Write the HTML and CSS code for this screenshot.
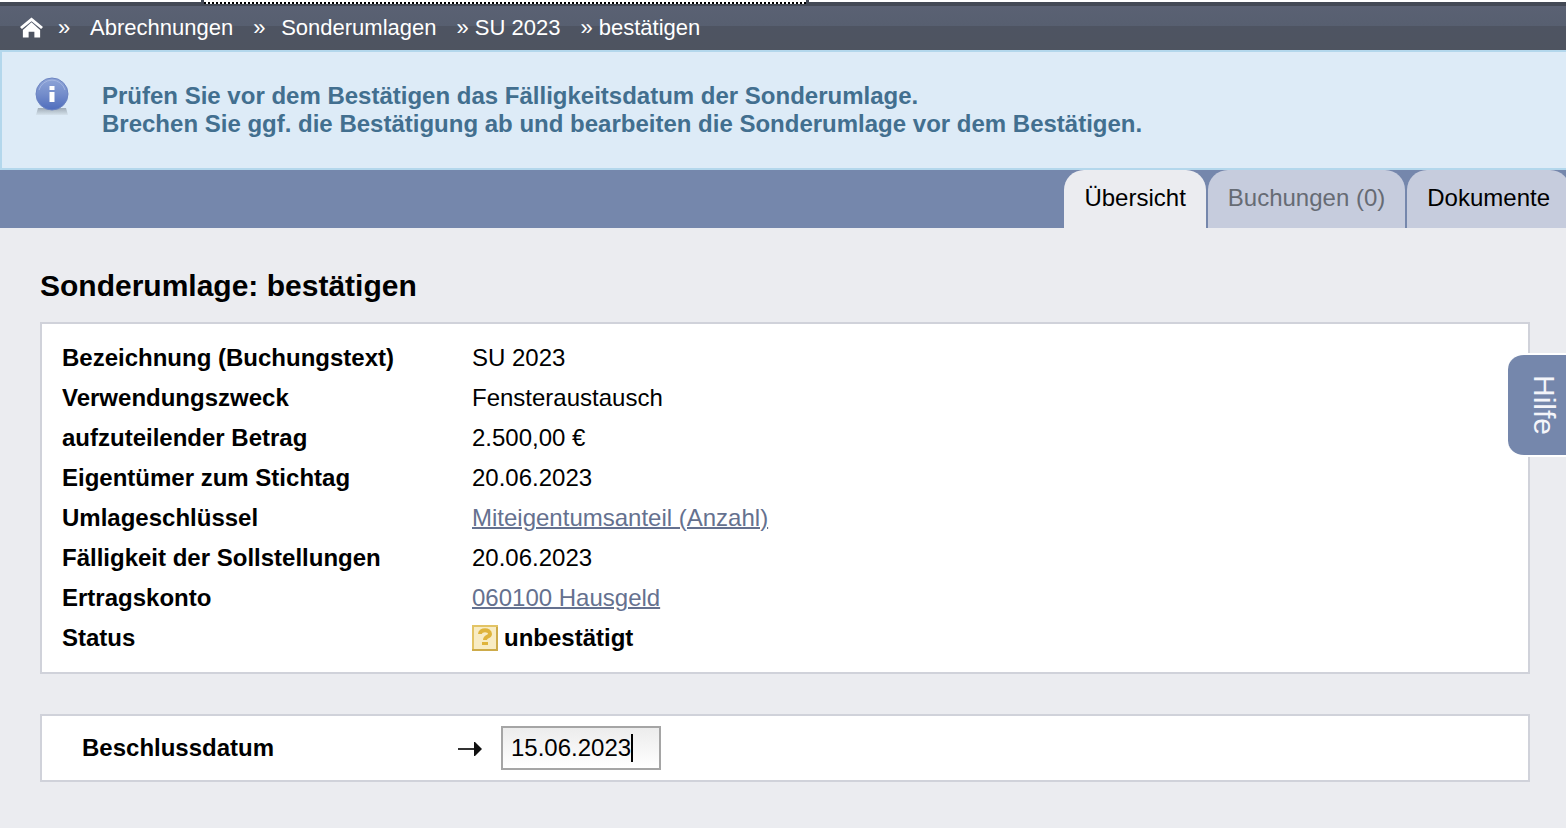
FILE: index.html
```html
<!DOCTYPE html>
<html lang="de">
<head>
  <meta charset="utf-8">
  <title>Sonderumlage: bestätigen</title>
  <link rel="stylesheet" href="styles.css">
</head>
<body>

  <header class="topbar">
    <span class="focus-line"></span>
    <nav class="breadcrumb">
      <a href="#" class="home" aria-label="Startseite">
        <svg width="23" height="22" viewBox="0 0 24 22">
          <path d="M12 0 L24 10 L22 12 L12 4 L2 12 L0 10 Z" fill="#fff"/>
          <path d="M3 13 L12 5 L21 13 V21 H15 V15 H9 V21 H3 Z" fill="#fff"/>
        </svg>
      </a>
      <span class="sep">»</span>
      <a href="#">Abrechnungen</a>
      <span class="sep">»</span>
      <a href="#">Sonderumlagen</a>
      <span class="crumb">» SU 2023</span>
      <span class="crumb">» bestätigen</span>
    </nav>
  </header>

  <div class="info">
    <svg class="info-icon" width="36" height="40" viewBox="0 0 36 40">
      <defs>
        <linearGradient id="ball" x1="0" y1="0" x2="0" y2="1">
          <stop offset="0" stop-color="#8fa5d8"/>
          <stop offset="0.5" stop-color="#748dcb"/>
          <stop offset="1" stop-color="#4f6dbd"/>
        </linearGradient>
        <linearGradient id="shade" x1="0" y1="0" x2="0" y2="1">
          <stop offset="0" stop-color="#9fabb6"/>
          <stop offset="1" stop-color="#d5e2ec"/>
        </linearGradient>
      </defs>
      <path d="M4 32 H32 L34 39 H2 Z" fill="url(#shade)"/>
      <circle cx="18" cy="18" r="16" fill="url(#ball)" stroke="#6c84c2"/>
      <path d="M5 14 A13.5 13.5 0 0 1 31 14" fill="none" stroke="#a3b5e0" stroke-width="1"/>
      <rect x="15.5" y="10" width="5" height="4" fill="#fff"/>
      <path d="M15.500 16 H20.5 V26 H15.5 Z" fill="#fff"/>
    </svg>
    <p>Prüfen Sie vor dem Bestätigen das Fälligkeitsdatum der Sonderumlage.<br>
      Brechen Sie ggf. die Bestätigung ab und bearbeiten die Sonderumlage vor dem Bestätigen.</p>
  </div>

  <nav class="tabs">
    <a href="#" class="tab active">Übersicht</a>
    <a href="#" class="tab disabled">Buchungen (0)</a>
    <a href="#" class="tab">Dokumente</a>
  </nav>

  <main>
    <h1>Sonderumlage: bestätigen</h1>

    <div class="box">
      <table class="details">
        <tr><th>Bezeichnung (Buchungstext)</th><td>SU 2023</td></tr>
        <tr><th>Verwendungszweck</th><td>Fensteraustausch</td></tr>
        <tr><th>aufzuteilender Betrag</th><td>2.500,00 €</td></tr>
        <tr><th>Eigentümer zum Stichtag</th><td>20.06.2023</td></tr>
        <tr><th>Umlageschlüssel</th><td><a href="#">Miteigentumsanteil (Anzahl)</a></td></tr>
        <tr><th>Fälligkeit der Sollstellungen</th><td>20.06.2023</td></tr>
        <tr><th>Ertragskonto</th><td><a href="#">060100 Hausgeld</a></td></tr>
        <tr>
          <th>Status</th>
          <td>
            <div class="status">
              <svg width="26" height="26" viewBox="0 0 26 26">
                <rect x="1" y="1" width="24" height="24" fill="#f8ecc4" stroke="#e3c465" stroke-width="2"/>
                <path d="M0 25 H25 V2" fill="none" stroke="#cdab4a" stroke-width="2"/>
                <path d="M8 9 C8 4 18 4 18 9 C18 12 13 11 13 15" fill="none" stroke="#dfb43c" stroke-width="4"/>
                <rect x="10" y="17" width="6" height="3" fill="#dfb43c"/>
              </svg>
              unbestätigt
            </div>
          </td>
        </tr>
      </table>
    </div>

    <form class="box date-form">
      <label for="date">Beschlussdatum</label>
      <svg class="arrow" width="26" height="16" viewBox="0 0 26 16">
        <path d="M1 9 H18" stroke="#333" stroke-width="2"/>
        <path d="M17 2 L18 2 L25 9 L18 16 L17 16 Z" fill="#111"/>
      </svg>
      <div class="field">
        <input type="text" id="date" value="15.06.2023">
        <span class="caret"></span>
      </div>
    </form>
  </main>

  <button type="button" class="help">Hilfe</button>

</body>
</html>
```
FILE: styles.css
```css
* {
  box-sizing: border-box;
}
body {
  margin: 0;
  background-color: #ebecf0;
  font-family: "Liberation Sans", Arial, sans-serif;
  font-size: 24px;
  line-height: 28px;
  color: #000;
  overflow-x: hidden;
}
.topbar {
  position: relative;
  height: 50px;
  border-top: 2px solid #fff;
  background: linear-gradient(#434955 4px, #5a6173 4px, #575f70 24px, #4e5462 24px, #4e5460);
}
.focus-line {
  position: absolute;
  top: 0;
  left: 202px;
  width: 606px;
  height: 2px;
  background: repeating-linear-gradient(90deg, #fff 0 2px, #000 2px 4px);
}
/* ends of the focus line */
.focus-line::before,
.focus-line::after {
  content: "";
  position: absolute;
  top: -2px;
  left: -1px;
  width: 3px;
  height: 4px;
  background-color: #434955;
}
.focus-line::after {
  left: 604px;
}
.breadcrumb {
  display: flex;
  align-items: center;
  padding: 12px 20px 0;
  font-size: 22px;
  color: #fff;
}
.breadcrumb a {
  color: #fff;
  text-decoration: none;
}
.home {
  display: flex;
  width: 38px;
}
.sep {
  width: 28px;
}
.home + .sep {
  margin-right: 4px;
}
.sep + a {
  margin-right: 20px;
}
.crumb {
  margin-right: 20px;
}
.info {
  display: flex;
  height: 120px;
  padding: 24px 32px;
  border: 2px solid #b3d7ec;
  border-right: 0;
  background-color: #ddebf7;
}
.info-icon {
  flex: none;
  margin-right: 32px;
}
.info p {
  margin: 6px 0 0;
  font-weight: bold;
  color: #426f8f;
}
.tabs {
  display: flex;
  justify-content: flex-end;
  gap: 2px;
  margin-right: -4px;
  background-color: #7587ac;
}
.tab {
  height: 58px;
  padding: 14px 20px;
  border-radius: 20px 20px 0 0;
  background-color: #c6ccdd;
  color: #000;
  text-decoration: none;
}
.tab.active {
  background-color: #ebecf0;
}
.tab.disabled {
  color: #666b74;
}
main {
  padding: 40px 36px 40px 40px;
}
h1 {
  margin: 0 0 18px;
  font-size: 30px;
  line-height: 36px;
}
.box {
  margin-bottom: 40px;
  border: 2px solid #d0d2da;
  background-color: #fff;
}
.details {
  width: 100%;
  margin: 14px 0;
  border-collapse: collapse;
}
.details th,
.details td {
  height: 40px;
  padding: 0 20px;
  text-align: left;
}
.details th {
  width: 410px;
}
.details a {
  color: #65718f;
  text-decoration-thickness: 2px;
}
.status {
  display: flex;
  align-items: center;
  gap: 6px;
  font-weight: bold;
}
.date-form {
  display: flex;
  align-items: center;
  padding: 10px 40px;
}
.date-form label {
  width: 375px;
  font-weight: bold;
}
.arrow {
  margin-right: 18px;
}
.field {
  position: relative;
}
.field input {
  display: block;
  width: 160px;
  height: 44px;
  padding: 0 8px;
  border: 2px solid #a5a5a5;
  outline: none;
  background: linear-gradient(#ececec, #fff);
  font: inherit;
}
.caret {
  position: absolute;
  top: 8px;
  left: 130px;
  width: 2px;
  height: 28px;
  background-color: #000;
}
.help {
  position: fixed;
  top: 353px;
  right: 0;
  width: 58px;
  height: 104px;
  padding: 0 0 0 14px;
  border: solid #fff;
  border-width: 2px 0;
  border-radius: 16px 0 0 16px;
  background-color: #7587ac;
  color: #f4f5fa;
  font: 30px "Liberation Sans", Arial, sans-serif;
  writing-mode: vertical-rl;
}
```
